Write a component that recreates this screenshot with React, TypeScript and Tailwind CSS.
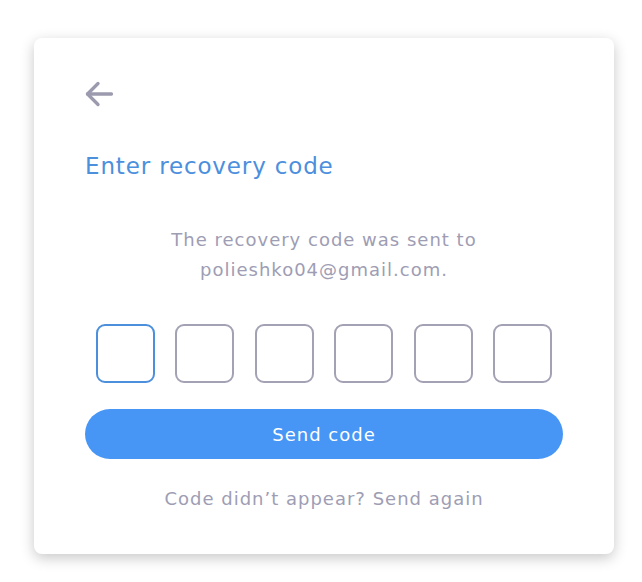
const cells = [0, 1, 2, 3, 4, 5]

function BackArrow() {
  return (
    <svg width="30" height="26" viewBox="0 0 30 26" fill="none" stroke="currentColor" strokeWidth={3.3} strokeLinecap="round" strokeLinejoin="round">
      <path d="M27.5 13H3.5" />
      <path d="M14 2.5L3.5 13L14 23.5" />
    </svg>
  )
}

export default function App() {
  return (
    <div className="min-h-screen bg-white pt-[38px] pl-[34px] font-['DejaVu_Sans','Noto_Sans',sans-serif]">
      <div className="w-[580px] h-[516px] rounded-lg bg-white shadow-[0_4px_14px_rgba(0,0,0,0.22)] px-[51px] pt-[41px]">
        {/* Back */}
        <button className="h-[30px] -ml-[1px] flex items-center text-[#9b9aaf]">
          <BackArrow />
        </button>

        {/* Title */}
        <h1 className="mt-[42px] text-[23px] leading-[30px] tracking-[0.85px] text-[#4b8fdd]">
          Enter recovery code
        </h1>

        {/* Description */}
        <p className="mt-[44px] text-center text-[18px] leading-[30px] tracking-[1px] text-[#9e9db4]">
          The recovery code was sent to
          <br />
          polieshko04@gmail.com.
        </p>

        {/* Code inputs */}
        <div className="mt-[39px] flex justify-center gap-[20.4px]">
          {cells.map((i) => (
            <input
              key={i}
              maxLength={1}
              className={`w-[59px] h-[59px] rounded-[9px] border-2 bg-white text-center outline-none ${
                i === 0 ? "border-[#4b8fdd]" : "border-[#a3a2b5]"
              }`}
            />
          ))}
        </div>

        {/* Submit */}
        <button className="mt-[26px] w-full h-[50px] rounded-full bg-[#4796f6] text-white text-[18px] tracking-[1px]">
          Send code
        </button>

        <p className="mt-[25px] text-center text-[18px] leading-[30px] tracking-[1px] text-[#9e9db4]">
          Code didn’t appear? Send again
        </p>
      </div>
    </div>
  )
}
